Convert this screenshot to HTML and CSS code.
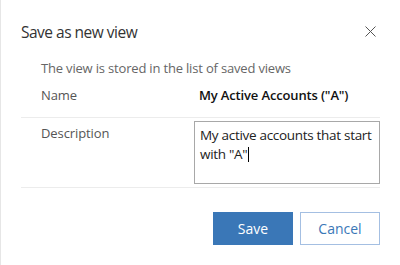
FILE: index.html
```html
<!DOCTYPE html>
<html>
<head>
<meta charset="utf-8">
<link rel="stylesheet" href="styles.css">
</head>
<body>
<div class="dialog">
  <div class="header">
    <div class="title">Save as new view</div>
    <button class="close" aria-label="Close">
      <svg width="11" height="11" viewBox="0 0 11 11"><path d="M0.5 0.5L10.5 10.5M10.5 0.5L0.5 10.5" stroke="#555" stroke-width="1" fill="none"/></svg>
    </button>
  </div>
  <div class="subtitle">The view is stored in the list of saved views</div>
  <div class="form">
    <div class="row row-name">
      <div class="label">Name</div>
      <div class="value">My Active Accounts ("A")</div>
    </div>
    <div class="row row-desc">
      <div class="label">Description</div>
      <div class="textarea">My active accounts that start with "A"<span class="caret"></span></div>
    </div>
  </div>
  <div class="footer">
    <button class="btn btn-primary">Save</button>
    <button class="btn btn-secondary">Cancel</button>
  </div>
</div>
</body>
</html>
```

FILE: styles.css
```css
html, body {
  margin: 0;
  padding: 0;
  background: #fff;
}
body {
  width: 400px;
  height: 265px;
  overflow: hidden;
  font-family: "Open Sans", "Noto Sans", sans-serif;
  color: #333;
}
.dialog {
  height: 265px;
  box-sizing: border-box;
  border-left: 1px solid #e6e6e6;
  padding: 21px 20px 0 20px;
}
.header {
  display: flex;
  justify-content: space-between;
  align-items: flex-start;
}
.title {
  font-size: 15.5px;
  line-height: 22px;
  letter-spacing: -0.5px;
  color: #333;
}
.close {
  border: 0;
  background: none;
  padding: 0;
  margin: 5px 4px 0 0;
  width: 11px;
  height: 11px;
  display: flex;
}
.subtitle {
  margin-top: 16px;
  padding-left: 20px;
  font-size: 13px;
  line-height: 18px;
  letter-spacing: -0.18px;
  color: #666;
}
.row {
  display: grid;
  grid-template-columns: 173px 1fr;
  border-bottom: 1px solid #ececec;
  font-size: 13px;
  line-height: 18px;
}
.row-name {
  padding: 9px 0 13px 0;
}
.row-desc {
  padding: 3px 0 3px 0;
}
.label {
  padding-left: 20px;
  color: #555;
  letter-spacing: -0.1px;
}
.row-desc .label {
  padding-top: 3px;
}
.value {
  padding-left: 5px;
  font-weight: 600;
  color: #111;
  letter-spacing: -0.15px;
}
.textarea {
  border: 1px solid #a8a8a8;
  padding: 4px 5px 3px 5px;
  box-sizing: border-box;
  height: 63px;
  font-size: 13.5px;
  line-height: 19px;
  letter-spacing: -0.3px;
  color: #222;
}
.caret {
  display: inline-block;
  width: 1px;
  height: 15px;
  background: #000;
  vertical-align: -3px;
  margin-left: 1px;
}
.footer {
  display: flex;
  justify-content: flex-end;
  gap: 7px;
  margin-top: 24px;
}
.btn {
  width: 80px;
  height: 33px;
  font-family: inherit;
  font-size: 14px;
  box-sizing: border-box;
  cursor: pointer;
}
.btn-primary {
  background: #3a77b7;
  border: 1px solid #3a77b7;
  color: #fff;
}
.btn-secondary {
  background: #fff;
  border: 1px solid #a4bfe2;
  color: #3a77b7;
}
```
